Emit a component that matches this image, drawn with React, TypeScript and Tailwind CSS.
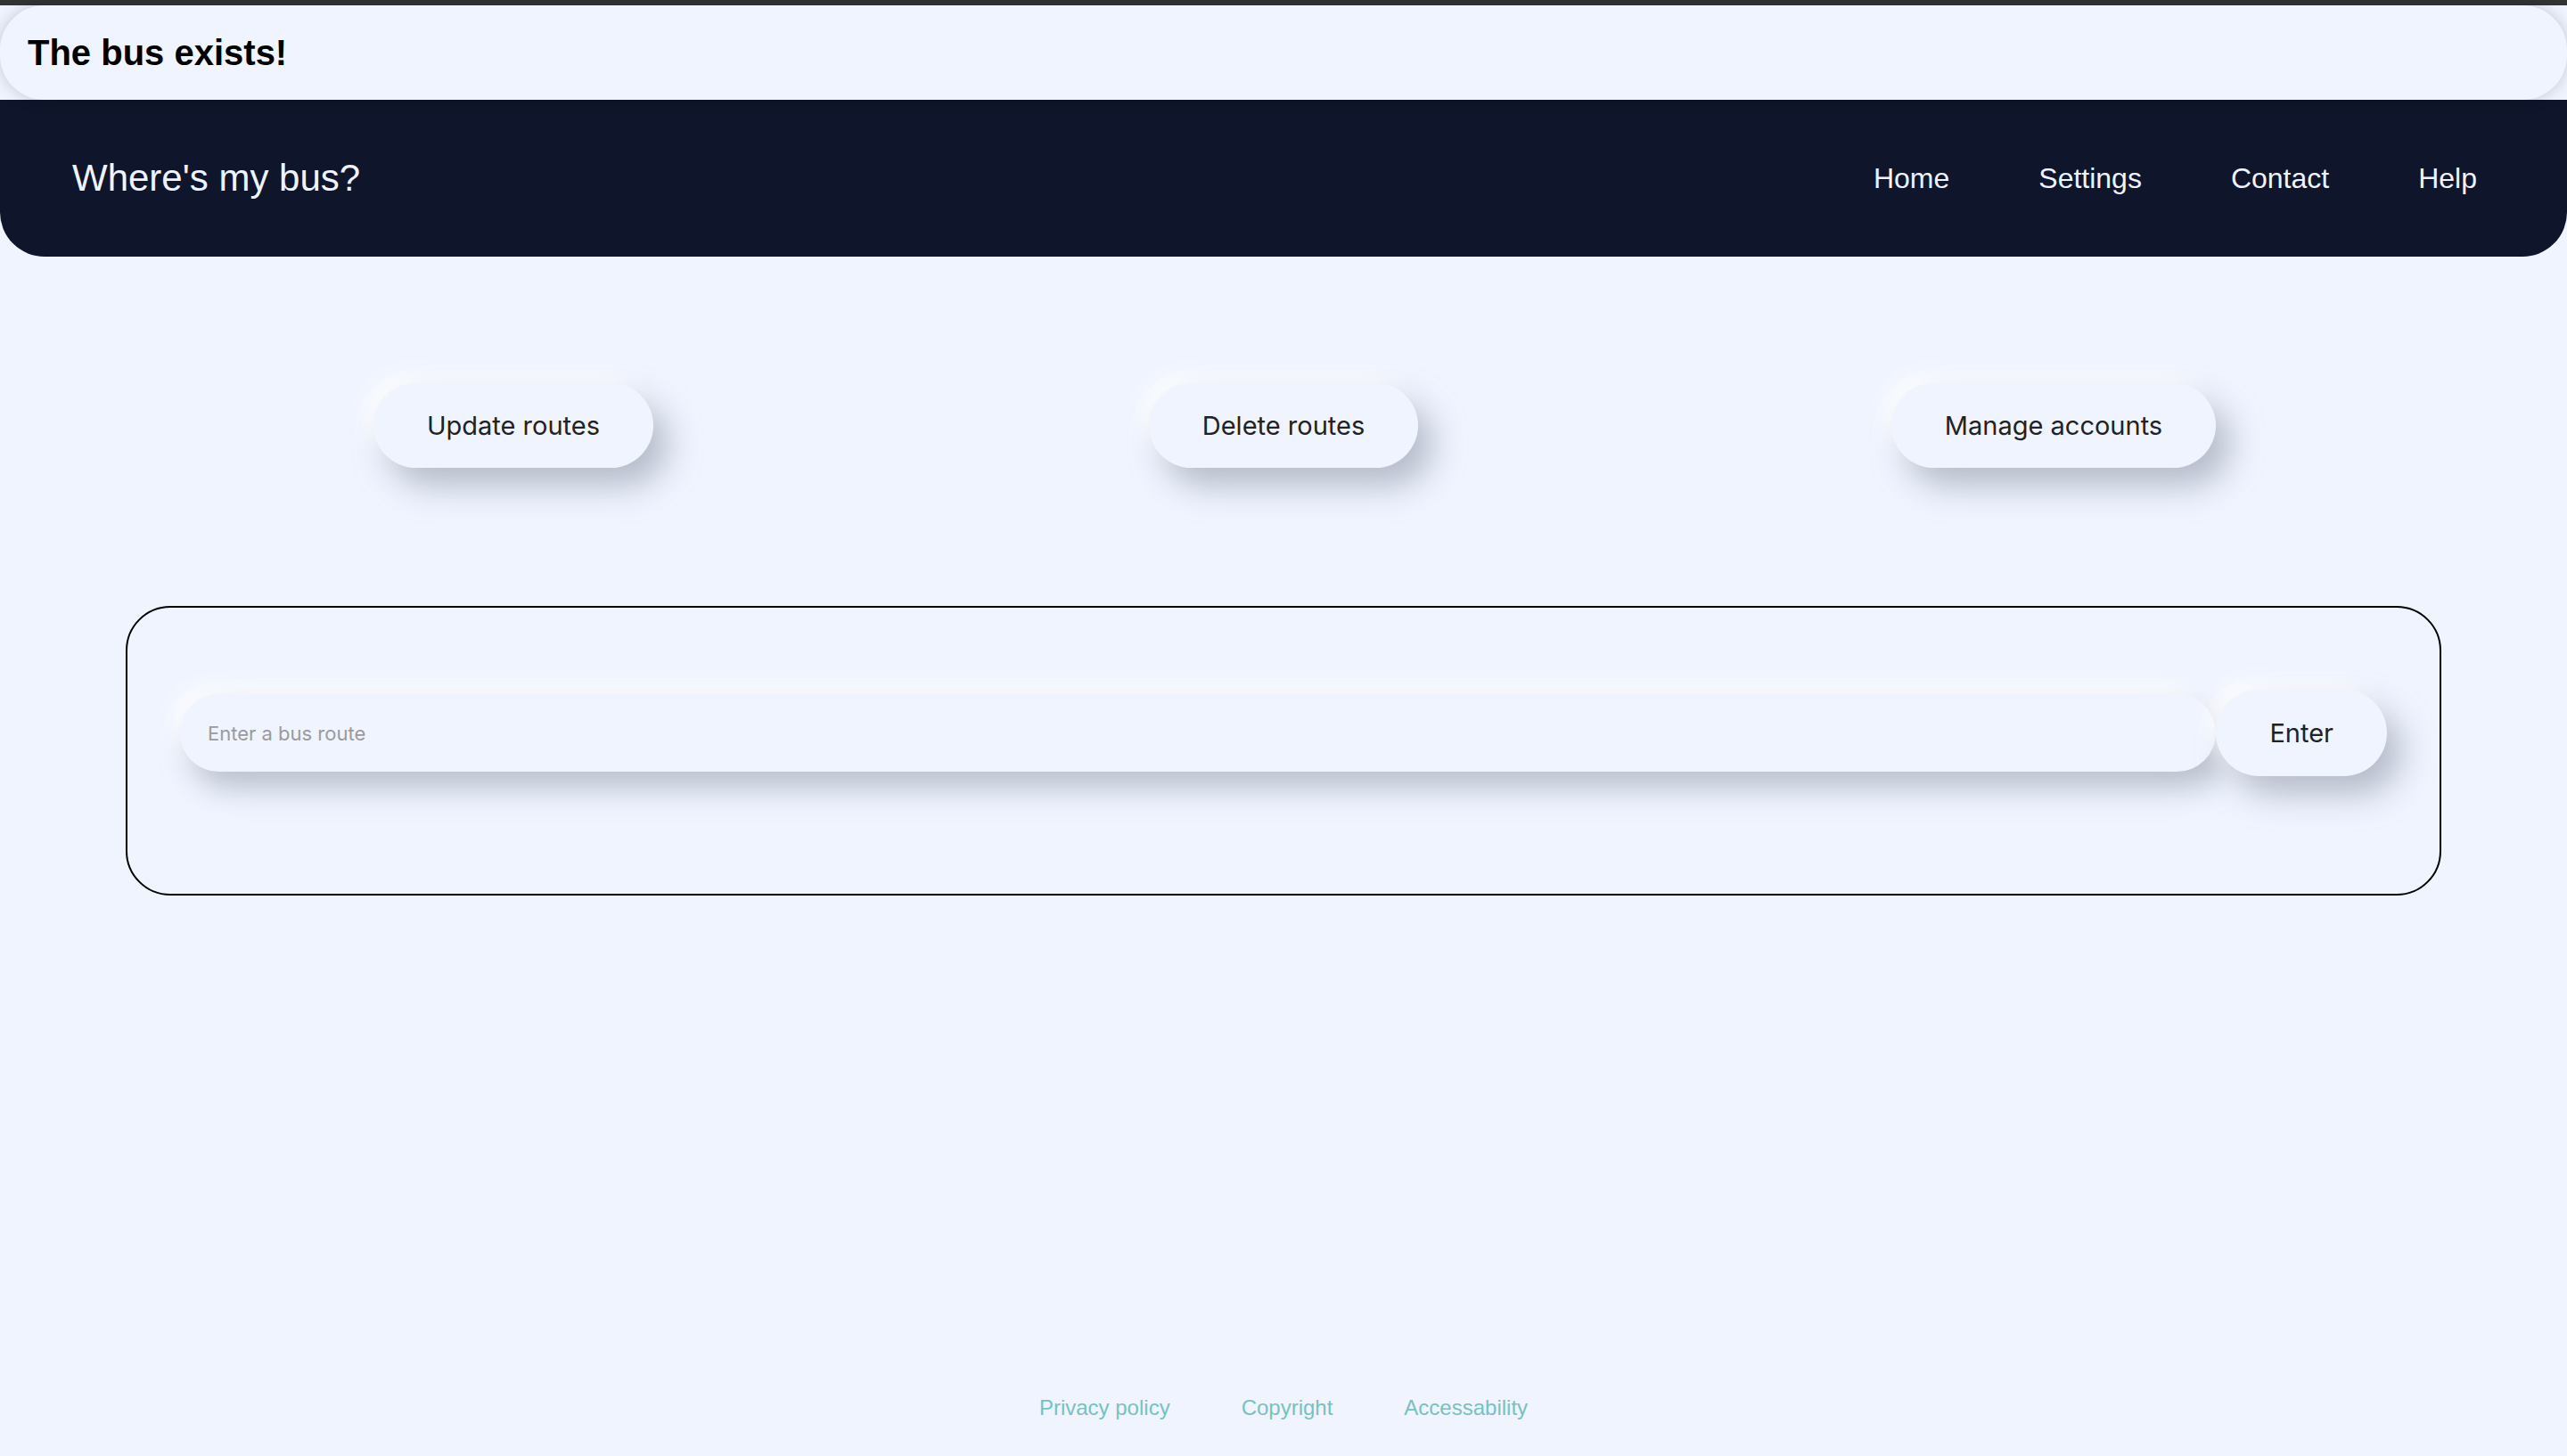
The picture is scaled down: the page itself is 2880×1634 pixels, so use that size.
import React from 'react';

const actions = ['Update routes', 'Delete routes', 'Manage accounts'];
const navLinks = ['Home', 'Settings', 'Contact', 'Help'];
const footerLinks = ['Privacy policy', 'Copyright', 'Accessability'];

export default function App() {
  return (
    <div className="min-h-screen flex flex-col bg-[#eff4ff] font-['Liberation_Sans',Arial,sans-serif]">
      {/* browser strip */}
      <div className="h-[6px] bg-[#333333]" />

      {/* status banner */}
      <div className="relative z-10 h-[106px] flex items-center pl-[31px] rounded-[50px] bg-[#eff4ff] shadow-[0_0_18px_rgba(0,0,0,0.18)]">
        <h2 className="text-[40px] font-bold text-black leading-none">The bus exists!</h2>
      </div>

      {/* nav */}
      <nav className="h-[176px] flex items-center justify-between pl-[81px] pr-[101px] bg-[#0f152a] rounded-b-[50px]">
        <h1 className="text-[42px] text-[#eef3ff] leading-none">Where's my bus?</h1>
        <ul className="flex items-center gap-[100px]">
          {navLinks.map((link) => (
            <li key={link} className="text-[32px] text-[#eef3ff] leading-none">
              {link}
            </li>
          ))}
        </ul>
      </nav>

      <main className="flex-1">
        {/* admin actions */}
        <div className="grid grid-cols-3 justify-items-center px-[144px] pt-[142px]">
          {actions.map((label) => (
            <button
              key={label}
              className="h-[95px] px-[60px] rounded-full bg-[#eff4ff] text-[29px] text-[#222222] font-['Inter',sans-serif] shadow-[16px_20px_36px_rgba(150,156,172,0.65),-10px_-10px_24px_rgba(255,255,255,0.9)]"
            >
              {label}
            </button>
          ))}
        </div>

        {/* route search */}
        <div className="mx-[141px] mt-[155px] border-2 border-black rounded-[50px] px-[59px] pt-[92px] pb-[132px]">
          <div className="flex items-center">
            <input
              type="text"
              placeholder="Enter a bus route"
              className="flex-1 h-[87px] pl-[31px] rounded-full bg-[#eff4ff] text-[22px] font-['Inter',sans-serif] placeholder:text-[#9b9b9b] outline-none shadow-[12px_18px_32px_rgba(150,156,172,0.6),-10px_-10px_24px_rgba(255,255,255,0.9)]"
            />
            <button className="h-[97px] px-[60px] rounded-full bg-[#eff4ff] text-[29px] text-[#222222] font-['Inter',sans-serif] shadow-[16px_20px_36px_rgba(150,156,172,0.65),-10px_-10px_24px_rgba(255,255,255,0.9)]">
              Enter
            </button>
          </div>
        </div>
      </main>

      {/* footer */}
      <footer className="flex justify-center gap-[80px] pb-[40px]">
        {footerLinks.map((link) => (
          <a key={link} className="text-[24px] text-[#79c1bf] leading-[28px]">
            {link}
          </a>
        ))}
      </footer>
    </div>
  );
}
